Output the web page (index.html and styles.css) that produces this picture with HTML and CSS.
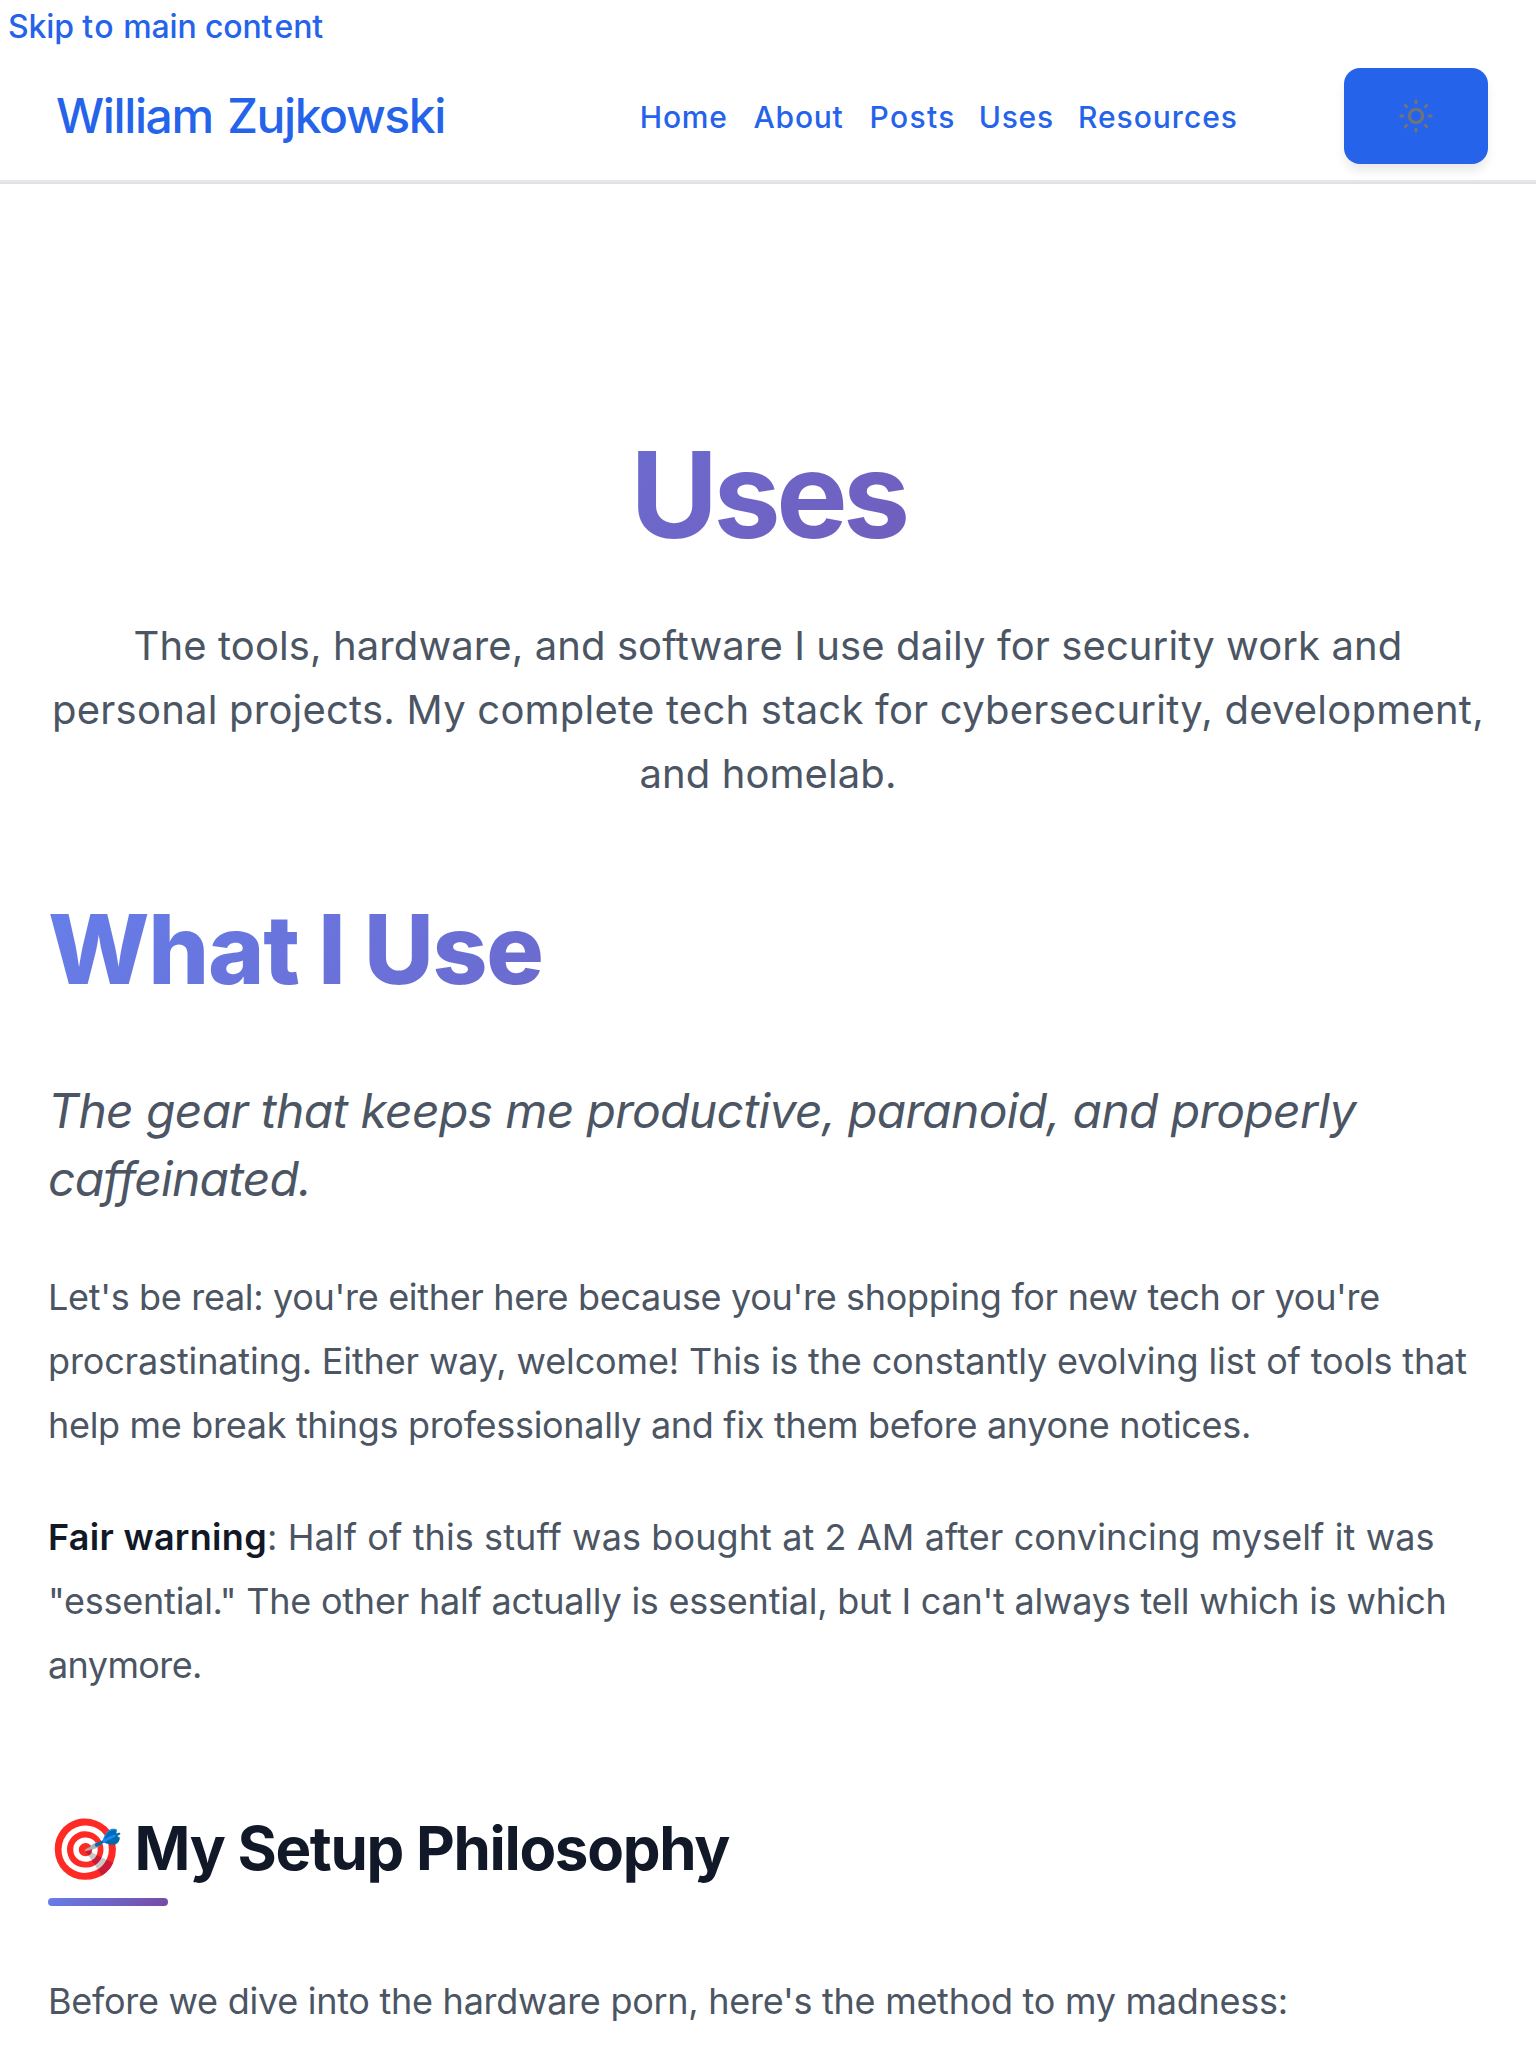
FILE: index.html
```html
<!DOCTYPE html>
<html lang="en"><head><meta charset="utf-8"><title>Uses</title><link rel="stylesheet" href="styles.css"></head>
<body>
<a class="skip" href="#main">Skip <span class="to">to</span> main con<span class="wide-t">t</span>ent</a>
<header class="header">
<a class="brand" href="#">William Zujkowski</a>
<nav class="nav"><a href="#">Home</a><a href="#">About</a><a class="posts" href="#">Posts</a><a href="#">Uses</a><a class="resources" href="#">Resources</a></nav>
<button class="theme" aria-label="Toggle theme"><svg viewBox="0 0 24 24" width="40" height="40" fill="none" stroke="currentColor" stroke-width="2" stroke-linecap="round"><circle cx="12" cy="12" r="4"/><path d="M12 3v1M12 20v1M3 12h1M20 12h1M5.64 5.64l.7.7M17.66 17.66l.7.7M5.64 18.36l.7-.7M17.66 6.34l.7-.7"/></svg></button>
</header>
<main id="main" class="main">
<h1 class="title">Uses</h1>
<p class="lead"><span class="line l1">The tools, hardware, and software I use daily for security work and</span> <span class="line l2">personal projects. My complete tech stack for cybersecurity, development,</span> <span class="line l1">and homelab.</span></p>
<h1 class="heading">What I Use</h1>
<p class="tagline"><span class="line g1">The gear that keeps me productive, paranoid, and properly</span> <span class="line g2">caffeinated.</span></p>
<p class="text"><span class="line t1">Let's be real: you're either here because you're shopping for new tech or you're</span> <span class="line t2">procrastinating. Either way, welcome! This is the constantly evolving list of tools that</span> <span class="line t3">help me break things professionally and fix them before anyone notices.</span></p>
<p class="text spaced"><span class="line t4"><strong>Fair warning</strong>: Half of this stuff was bought at 2 AM after convincing myself it was</span> <span class="line t5">"essential." The other half actually is essential, but I can't always tell which is which</span> <span class="line t6">anymore.</span></p>
<h2 class="section">🎯 My Setup Philosophy</h2>
<p class="text"><span class="line t7">Before we dive into the hardware porn, here's the method to my madness:</span></p>
</main>
</body></html>
```
FILE: styles.css
```css
*{box-sizing:border-box}
body{margin:0;height:2048px;overflow:hidden;background:#fff;color:#4b5563;font-family:Inter,"Noto Sans",sans-serif}
a{color:#2563eb;text-decoration:none}
.skip{display:block;height:52px;padding:1px 8px 0;font-size:32px;line-height:52px;font-weight:500;letter-spacing:-.15px}
.to{letter-spacing:1.4px}
.wide-t{letter-spacing:2px}
.header{display:flex;align-items:center;height:130px;padding:0 48px 0 56px;border-bottom:2px solid #e5e7eb;box-shadow:0 2px 0 #dfe1e5}
.brand{margin-top:-1px;font-size:48px;font-weight:500;letter-spacing:-1.38px;word-spacing:3px}
.nav{display:flex;gap:26px;margin:2px 0 0 auto;font-size:30px;font-weight:500;letter-spacing:.75px}
.posts{letter-spacing:1.35px;margin-right:-3px}
.resources{letter-spacing:1px;margin-left:-2px}
.theme{display:flex;align-items:center;justify-content:center;width:144px;height:96px;margin-left:106px;padding:0;border:0;border-radius:16px;background:#2563eb;color:#6b7280;box-shadow:0 8px 12px -2px #0000001a}
.main{padding:240px 48px 0}
.title,.heading{margin:0;color:transparent;background:linear-gradient(135deg,#667eea,#764ba2);background-clip:text;-webkit-background-clip:text}
.title{padding-top:1px;font-size:120px;line-height:144px;letter-spacing:-4.6px;text-align:center}
.line{display:block;white-space:nowrap}
.lead{margin:47px 0 0;font-size:40px;line-height:64px;text-align:center}
.l1{letter-spacing:.1px}
.l2{letter-spacing:.22px}
.heading{margin-top:83px;font-size:96px;line-height:120px;font-weight:800;letter-spacing:-1.3px}
.tagline{margin:68px 0 0;font-size:48px;line-height:68px;font-style:italic}
.g1{letter-spacing:-.65px}
.g2{letter-spacing:-.8px}
.text{margin:52px 0 0;font-size:36px;line-height:64px}
.t1{letter-spacing:-.32px}
.t2{letter-spacing:-.14px}
.t3{letter-spacing:-.31px}
.t4{letter-spacing:.1px}
.t5{letter-spacing:-.23px}
.t6{letter-spacing:-.6px}
.t7{letter-spacing:-.27px}
.spaced{margin-top:48px}
strong{color:#111827;font-weight:600;letter-spacing:.3px}
.section{margin:111px 0 0;color:#111827;font-size:60px;line-height:80px;letter-spacing:-1.32px}
.section::after{content:"";display:block;width:120px;height:8px;margin-top:10px;border-radius:4px;background:linear-gradient(135deg,#667eea,#764ba2)}
.section + .text{margin-top:63px}
```
